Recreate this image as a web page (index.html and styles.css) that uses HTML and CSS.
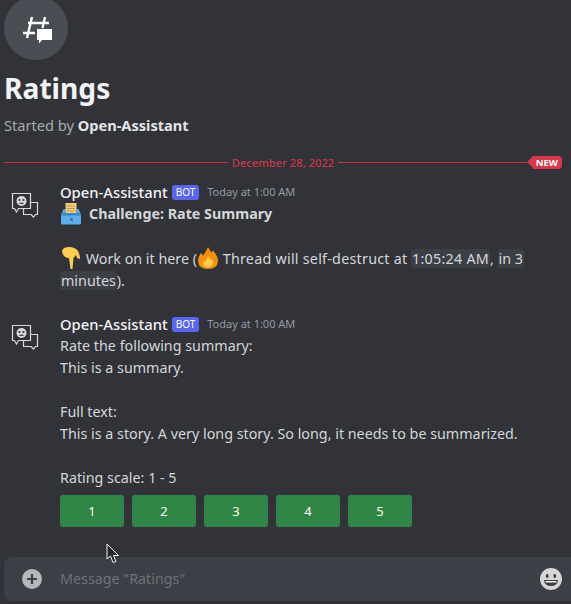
FILE: index.html
```html
<!DOCTYPE html>
<html lang="en">
<head>
  <meta charset="UTF-8" />
  <title>Ratings</title>
  <link rel="stylesheet" href="styles.css">
</head>
<body>
  <div class="thread-head">
    <div class="thread-icon">
      <svg width="32" height="32" viewBox="0 0 32 32">
        <path d="M12 5 7 26M25 5 22.500 16M8 11H29M3 21H15" fill="none" stroke="#fff" stroke-width="2.400"/>
        <path d="M17 17H32V28H22L19 31.500V28H17Z" fill="#fff"/>
      </svg>
    </div>
    <h1>Ratings</h1>
    <p class="started">Started by <b>Open-Assistant</b></p>
  </div>

  <div class="divider">
    <span class="line"></span>
    <span class="date">December 28, 2022</span>
    <span class="line"></span>
    <span class="new">NEW</span>
  </div>

  <div class="message first">
    <svg class="avatar" width="28" height="26" viewBox="0 0 28 26">
      <path d="M1.500 1.500H19.500V16.500H7.500L5.500 20 3.500 16.500H1.500Z" fill="none" stroke="#d8d9da" stroke-width="1.200"/>
      <path d="M19.500 10.500H26.500V22.500H24.500L22.500 25 20 22.500H12.500V16.500" fill="none" stroke="#d8d9da" stroke-width="1.200"/>
      <circle cx="10.500" cy="9" r="5" fill="#d8d9da"/>
      <circle cx="8.500" cy="8" r="1.100" fill="#313338"/>
      <circle cx="12.500" cy="8" r="1.100" fill="#313338"/>
      <path d="M8.500 11.300H12.500" stroke="#313338" stroke-width="1.200"/>
    </svg>
    <div class="body">
      <div class="meta"><span class="author">Open-Assistant</span><span class="bot">BOT</span><span class="time">Today at 1:00 AM</span></div>
      <div class="line-text strong-line">
        <svg class="emoji tray" width="22" height="22" viewBox="0 0 22 22">
          <rect x="5.500" y="0" width="11" height="11" fill="#f3cf7a"/>
          <path d="M7 3H15M7 5.500H15M7 8H15" stroke="#c9974a" stroke-width="1"/>
          <path d="M3.500 6H5.500V10H16.500V6H18.500L21 12V20Q21 21.500 19.500 21.500H2.500Q1 21.500 1 20V12Z" fill="#5dadec"/>
          <rect x="1" y="10" width="20" height="2.500" fill="#3b88c3"/>
          <path d="M12.500 14.500 9.500 16.500 12.500 18.500Z" fill="#2a6797"/>
        </svg>
        <b>Challenge: Rate Summary</b>
      </div>
      <div class="line-text">&nbsp;</div>
      <div class="line-text">
        <svg class="emoji" width="22" height="22" viewBox="0 0 22 22">
          <path d="M2 4Q3 0 9 0Q15 0 18 4Q20 8 20 12L17 11 16 8 13.500 11 12.500 22H10.500L9 11Q3 11 2 4Z" fill="#ffcc4d"/>
        </svg>
        Work on it here (<svg class="emoji fire" width="22" height="22" viewBox="0 0 22 22">
          <path d="M11 0Q13 4 14.500 5.500L16 3.500Q21 9 21 14Q20.500 22 11 22Q1.500 22 1 14Q1 10 4 6L6 8.500Q9 5 11 0Z" fill="#f4900c"/>
          <path d="M11 9Q13 13 15 13L16 12.500Q17 20 11 20.500Q5 20 6 14.500L7.500 15Q10 13 11 9Z" fill="#ffcc4d"/>
        </svg> <span class="wide">Thread will self-destruct at</span> <span class="stamp wide">1:05:24 AM</span>, <span class="stamp">in 3</span> <span class="stamp">minutes</span>).
      </div>
    </div>
  </div>

  <div class="message">
    <svg class="avatar" width="28" height="26" viewBox="0 0 28 26">
      <path d="M1.500 1.500H19.500V16.500H7.500L5.500 20 3.500 16.500H1.500Z" fill="none" stroke="#d8d9da" stroke-width="1.200"/>
      <path d="M19.500 10.500H26.500V22.500H24.500L22.500 25 20 22.500H12.500V16.500" fill="none" stroke="#d8d9da" stroke-width="1.200"/>
      <circle cx="10.500" cy="9" r="5" fill="#d8d9da"/>
      <circle cx="8.500" cy="8" r="1.100" fill="#313338"/>
      <circle cx="12.500" cy="8" r="1.100" fill="#313338"/>
      <path d="M8.500 11.300H12.500" stroke="#313338" stroke-width="1.200"/>
    </svg>
    <div class="body">
      <div class="meta"><span class="author">Open-Assistant</span><span class="bot">BOT</span><span class="time">Today at 1:00 AM</span></div>
      <div class="line-text">Rate the following summary:</div>
      <div class="line-text">This is a summary.</div>
      <div class="line-text">&nbsp;</div>
      <div class="line-text">Full text:</div>
      <div class="line-text">This is a story. A very long story. So long, it needs to be summarized.</div>
      <div class="line-text">&nbsp;</div>
      <div class="line-text">Rating scale: 1 - 5</div>
      <div class="buttons">
        <button>1</button>
        <button>2</button>
        <button>3</button>
        <button>4</button>
        <button>5</button>
      </div>
    </div>
  </div>

  <div class="composer">
    <span class="plus">
      <svg width="20" height="20" viewBox="0 0 20 20">
        <circle cx="10" cy="10" r="10" fill="#b5b7bb"/>
        <path d="M10 5V15M5 10H15" stroke="#3c3f46" stroke-width="2.200"/>
      </svg>
    </span>
    <span class="placeholder">Message "Ratings"</span>
    <svg class="smile" width="22" height="22" viewBox="0 0 22 22">
      <circle cx="11" cy="11" r="11" fill="#d6d6d6"/>
      <ellipse cx="7.200" cy="8" rx="1.400" ry="2" fill="#3a3c41"/>
      <ellipse cx="14.800" cy="8" rx="1.400" ry="2" fill="#3a3c41"/>
      <path d="M4 12H18Q17.500 18 11 18Q4.500 18 4 12Z" fill="#3a3c41"/>
      <path d="M5.500 13H16.500V14.500H5.500Z" fill="#f5f5f5"/>
    </svg>
  </div>

  <svg class="cursor" width="15" height="21" viewBox="0 0 15 21">
    <path d="M1 1V16L4.500 13 7 19.500 10 18.500 7.500 12.500H12.500Z" fill="#25272b" stroke="#f2f2f2" stroke-width="1"/>
  </svg>
</body>
</html>
```

FILE: styles.css
```css
html, body {
  height: 100%;
}
body {
  margin: 0;
  height: 604px;
  overflow: hidden;
  position: relative;
  display: flex;
  flex-direction: column;
  background: #313338;
  color: #d4d7da;
  font-family: "Noto Sans", "Open Sans", sans-serif;
  font-size: 14.300px;
  line-height: 22px;
}

/* thread header */
.thread-head {
  padding: 0 4px;
}
.thread-icon {
  width: 64px;
  height: 64px;
  margin-top: -4px;
  border-radius: 50%;
  background: #4a4d53;
  display: flex;
  align-items: center;
  justify-content: center;
}
h1 {
  margin: 8px 0 0;
  color: #f2f3f5;
  font-size: 28.200px;
  line-height: 40px;
  font-weight: 700;
}
.started {
  margin: 7px 0 0;
  color: #a8abb0;
  font-size: 14.600px;
  line-height: 20px;
}
.started b {
  color: #e3e5e8;
}

/* date divider */
.divider {
  position: relative;
  display: flex;
  align-items: center;
  margin: 17px 9px 0 4px;
  height: 21px;
}
.line {
  flex: 1;
  height: 1px;
  background: #c9303f;
}
.date {
  padding: 0 4px;
  color: #c9374a;
  font-size: 11.200px;
  line-height: 20px;
  font-weight: 500;
}
.new {
  position: absolute;
  right: 0;
  top: 4px;
  height: 13px;
  padding: 0 4px 0 3px;
  background: #da374a;
  border-radius: 0 4px 4px 0;
  color: #fff;
  font-size: 9.500px;
  line-height: 13px;
  font-weight: 700;
}
.new::before {
  content: "";
  position: absolute;
  left: -6px;
  top: 0;
  border: 6.500px solid transparent;
  border-left: 0;
  border-right: 6px solid #da374a;
}

/* messages */
.message {
  display: flex;
  margin-top: 21px;
  padding-left: 11px;
}
.message.first {
  margin-top: 8px;
}
.avatar {
  flex: none;
  margin: 11px 21px 0 0;
}
.body {
  flex: 1;
  min-width: 0;
  padding-right: 40px;
}
.meta {
  display: flex;
  align-items: center;
  height: 22px;
}
.author {
  color: #f2f3f5;
  font-size: 14.800px;
  font-weight: 500;
}
.bot {
  margin-left: 4px;
  padding: 0 4px;
  height: 15px;
  background: #5865f2;
  border-radius: 3px;
  color: #fff;
  font-size: 10px;
  line-height: 15px;
}
.time {
  margin-left: 8px;
  color: #949ba4;
  font-size: 11px;
}
.line-text {
  min-height: 22px;
}
.strong-line {
  display: flex;
  align-items: center;
}
.strong-line b {
  font-weight: 700;
  margin-left: 7px;
}
.emoji {
  vertical-align: -5px;
}
.wide {
  letter-spacing: .25px;
}
.stamp {
  background: #3c3f45;
  border-radius: 3px;
  padding: 0 1px;
}

.buttons {
  display: flex;
  gap: 8px;
  margin-top: 6px;
}
button {
  width: 64px;
  height: 32px;
  padding: 0;
  border: 0;
  border-radius: 3px;
  background: #2f8544;
  color: #fff;
  font-family: inherit;
  font-size: 13px;
}

/* message box */
.composer {
  margin: auto 0 3px 4px;
  height: 44px;
  padding: 0 9px 0 18px;
  display: flex;
  align-items: center;
  background: #3c3f46;
  border-radius: 8px 0 0 8px;
}
.plus {
  display: flex;
  margin-right: 18px;
}
.placeholder {
  flex: 1;
  color: #6d7178;
}
.cursor {
  position: absolute;
  left: 106px;
  top: 543px;
}
```
